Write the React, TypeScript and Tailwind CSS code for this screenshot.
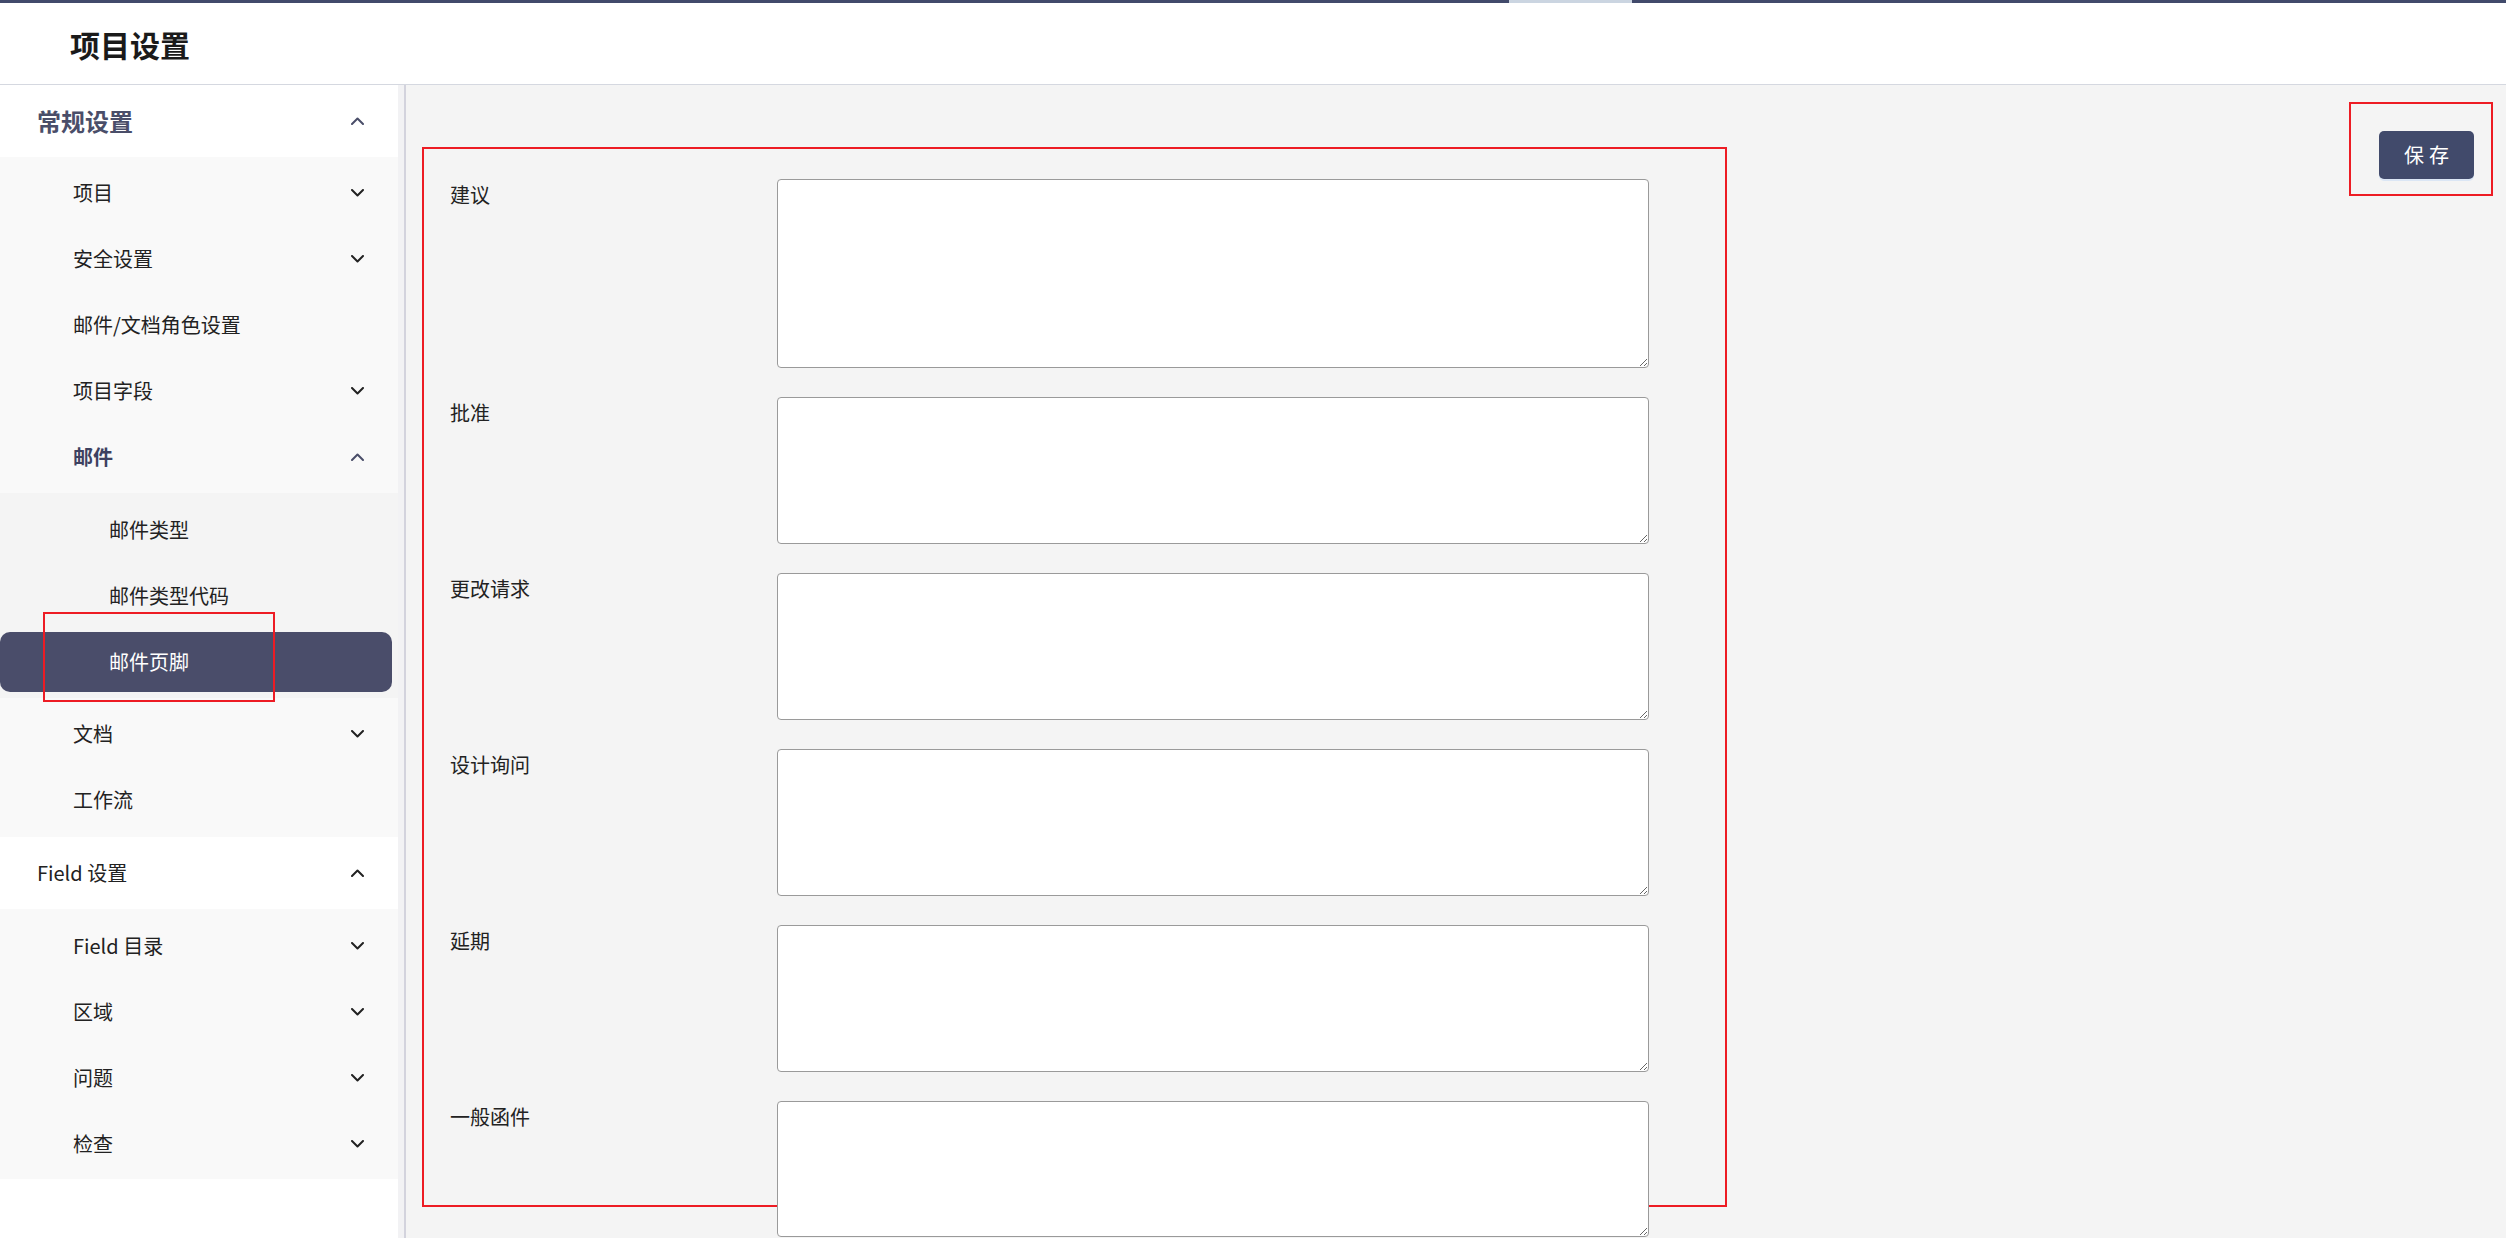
import React from "react";

const Chevron: React.FC<{ up?: boolean; color?: string }> = ({ up, color = "#222" }) => (
  <svg width="13" height="8" viewBox="0 0 13 8" fill="none" className="shrink-0">
    <polyline
      points={up ? "1,7 6.5,1.5 12,7" : "1,1 6.5,6.5 12,1"}
      stroke={color}
      strokeWidth="2"
      strokeLinecap="round"
      strokeLinejoin="round"
    />
  </svg>
);

const SubItem: React.FC<{ label: string; open?: boolean; arrow?: boolean; bold?: boolean }> = ({
  label,
  open,
  arrow = true,
  bold,
}) => (
  <div className="h-[60px] flex items-center justify-between pl-[73px] pr-[34px]">
    <span
      className={[
        "text-[20px] leading-[24px]",
        bold ? "font-bold text-[#3d4160]" : "text-[#222]",
      ].join(" ")}
    >
      {label}
    </span>
    {arrow && <Chevron up={open} color={bold ? "#4a4e69" : "#222"} />}
  </div>
);

const LeafItem: React.FC<{ label: string; active?: boolean }> = ({ label, active }) => (
  <div className="relative mr-[6px]">
    <div
      className={[
        "h-[60px] flex items-center pl-[109px] rounded-[10px]",
        active ? "bg-[#4a4d6a] text-white" : "text-[#222]",
      ].join(" ")}
    >
      <span className="text-[20px] leading-[24px]">{label}</span>
    </div>
    {active && (
      <div className="absolute left-[43px] top-[-20px] w-[232px] h-[90px] border-2 border-[#ed1c24]" />
    )}
  </div>
);

const Section: React.FC<{ label: string; bold?: boolean; children: React.ReactNode }> = ({
  label,
  bold,
  children,
}) => (
  <div>
    <div className="h-[72px] bg-white flex items-center justify-between pl-[37px] pr-[34px]">
      <span
        className={
          bold
            ? "text-[24px] leading-[28px] font-bold text-[#4a4e69]"
            : "text-[20px] leading-[24px] text-[#222]"
        }
      >
        {label}
      </span>
      <Chevron up color={bold ? "#4a4e69" : "#222"} />
    </div>
    {children}
  </div>
);

const fields = [
  { label: "建议", h: "h-[189px]" },
  { label: "批准", h: "h-[147px]" },
  { label: "更改请求", h: "h-[147px]" },
  { label: "设计询问", h: "h-[147px]" },
  { label: "延期", h: "h-[147px]" },
  { label: "一般函件", h: "h-[136px]" },
];

export default function App() {
  return (
    <div className="h-[1238px] w-full flex flex-col overflow-hidden bg-white font-['Noto_Sans_CJK_SC','Noto_Sans',sans-serif]">
      <div className="h-[3px] flex shrink-0">
        <div className="w-[1509px] bg-[#414a6b]" />
        <div className="w-[123px] bg-[#cbd5e1]" />
        <div className="flex-1 bg-[#414a6b]" />
      </div>
      <header className="h-[82px] shrink-0 bg-white border-b border-[#d5d8e0] flex items-center pl-[70px]">
        <h1 className="text-[30px] leading-[36px] font-bold text-[#1a1a1a]">项目设置</h1>
      </header>

      <div className="flex flex-1 min-h-0">
        <aside className="w-[398px] shrink-0 bg-white">
          <Section label="常规设置" bold>
            <div className="bg-[#f9f9f9] pt-[6px] pb-[7px] flex flex-col gap-[6px]">
              <SubItem label="项目" />
              <SubItem label="安全设置" />
              <SubItem label="邮件/文档角色设置" arrow={false} />
              <SubItem label="项目字段" />
              <SubItem label="邮件" open bold />
              <div className="bg-[#f4f4f4] pt-[7px] pb-[6px] flex flex-col gap-[6px]">
                <LeafItem label="邮件类型" />
                <LeafItem label="邮件类型代码" />
                <LeafItem label="邮件页脚" active />
              </div>
              <SubItem label="文档" />
              <SubItem label="工作流" arrow={false} />
            </div>
          </Section>
          <Section label="Field 设置">
            <div className="bg-[#f9f9f9] pt-[7px] pb-[5px] flex flex-col gap-[6px]">
              <SubItem label="Field 目录" />
              <SubItem label="区域" />
              <SubItem label="问题" />
              <SubItem label="检查" />
            </div>
          </Section>
        </aside>
        <div className="w-[8px] shrink-0 bg-[#f2f2f4] border-r-2 border-[#d3d3dd]" />

        <main className="flex-1 min-w-0 bg-[#f4f4f4] flex justify-between items-start overflow-hidden">
          <div className="ml-[16px] mt-[62px] w-[1305px] h-[1060px] shrink-0 border-2 border-[#ed1c24] pl-[26px] pt-[30px]">
            <div className="flex flex-col gap-[29px]">
              {fields.map((f) => (
                <div key={f.label} className="flex items-start">
                  <label className="w-[327px] shrink-0 pt-[4px] text-[20px] leading-[24px] text-[#222]">
                    {f.label}
                  </label>
                  <textarea
                    className={[
                      "w-[872px] bg-white border border-[#9a9a9a] rounded-[4px] outline-none",
                      f.h,
                    ].join(" ")}
                  />
                </div>
              ))}
            </div>
          </div>

          <div className="mt-[17px] mr-[13px] w-[144px] h-[94px] shrink-0 border-2 border-[#ed1c24] pt-[27px] pl-[28px]">
            <button className="w-[95px] h-[48px] bg-[#414a6b] rounded-[5px] text-white text-[20px] leading-[24px] tracking-[5px] pl-[5px] shadow-[0_2px_0_#dbe6f5]">
              保存
            </button>
          </div>
        </main>
      </div>
    </div>
  );
}
